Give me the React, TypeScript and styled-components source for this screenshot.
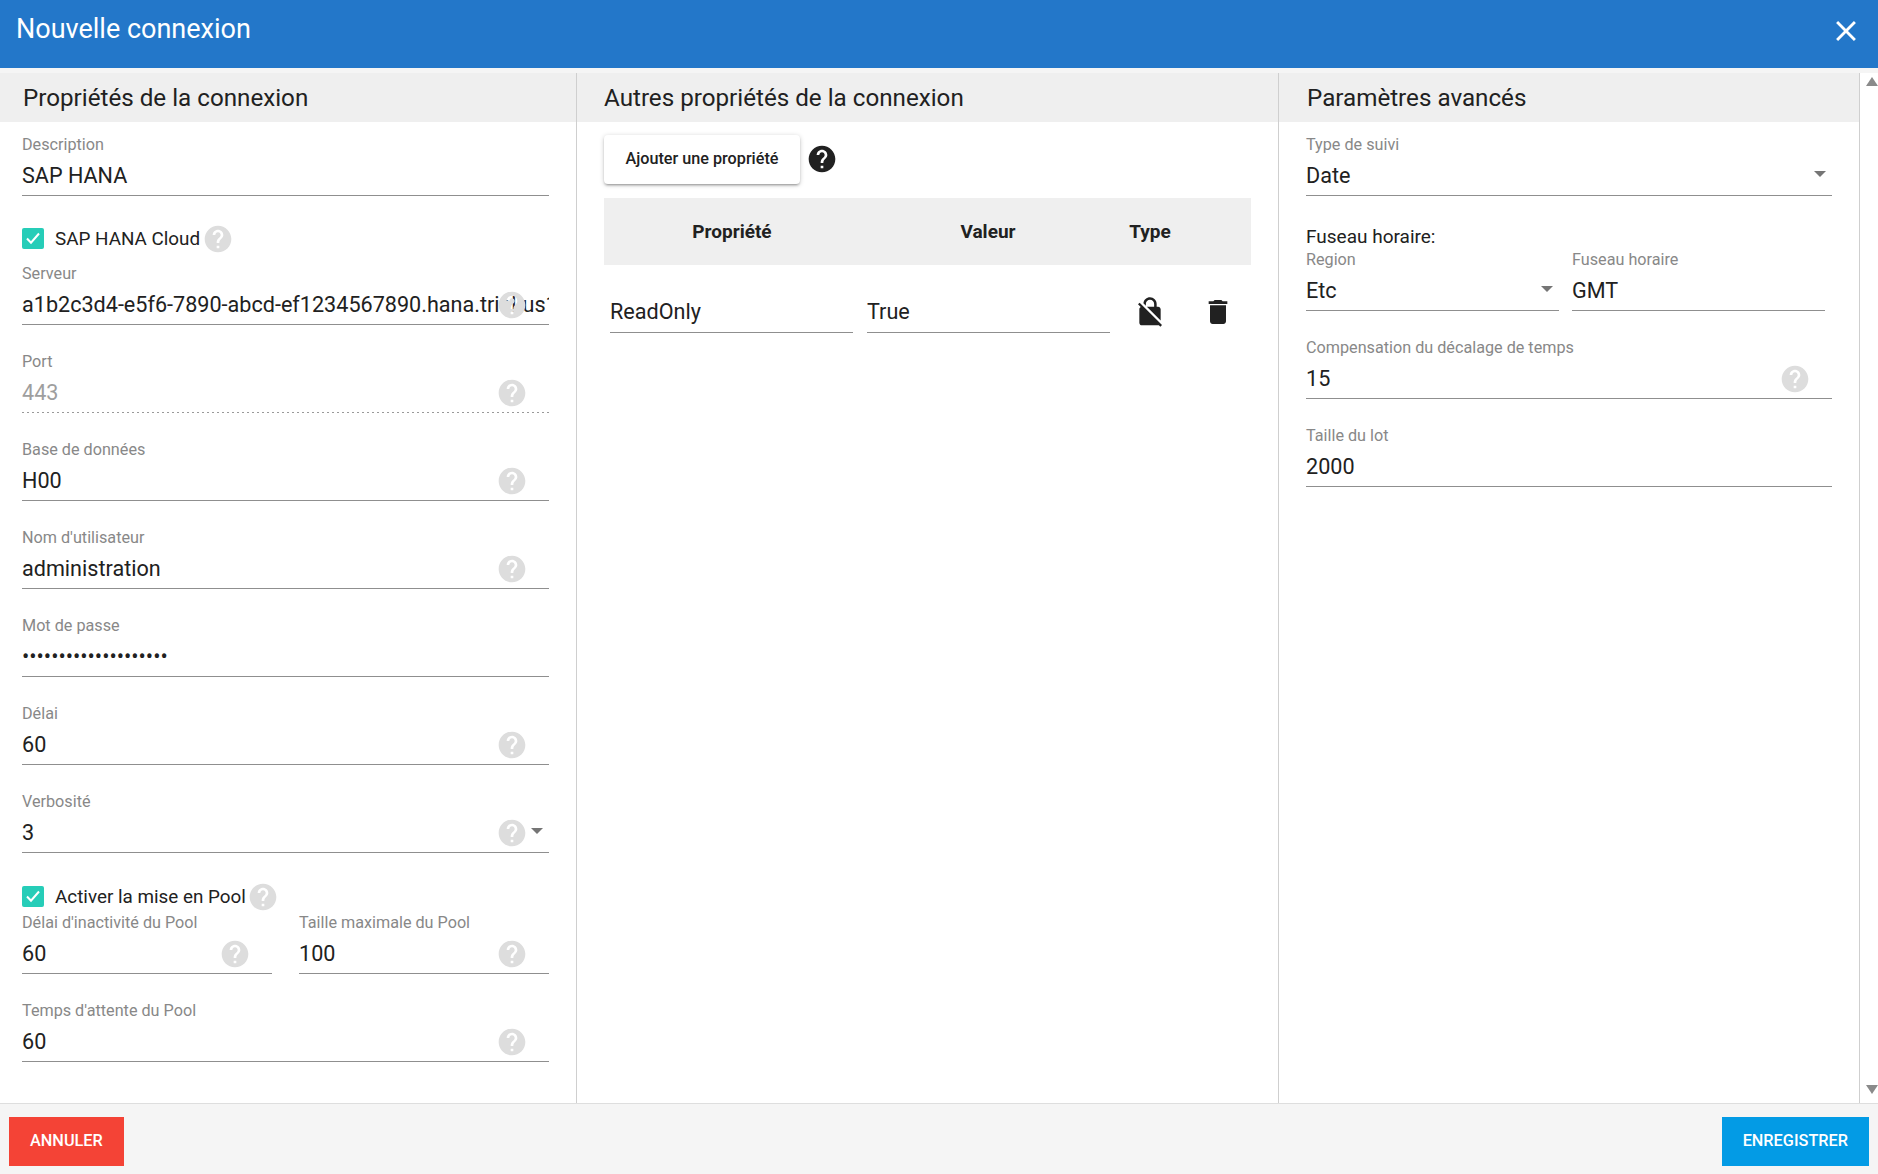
import React from 'react'
import styled, { createGlobalStyle } from 'styled-components'
import { MdClose, MdDelete, MdHelp, MdNoEncryption } from 'react-icons/md'

const GlobalStyle = createGlobalStyle`
  html, body {
    margin: 0;
    padding: 0;
    height: 100%;
    background: #fff;
    font-family: Roboto, "Liberation Sans", sans-serif;
    color: #212121;
  }
  * {
    box-sizing: border-box;
  }
`

const App = () => (
  <Page>
    <GlobalStyle />
    <Header>
      <HeaderTitle>Nouvelle connexion</HeaderTitle>
      <CloseButton>
        <MdClose size={34} />
      </CloseButton>
    </Header>
    <Body>
      <Column $width={577}>
        <ColumnTitle $left={23}>Propriétés de la connexion</ColumnTitle>
        <ColumnContent $left={22}>
          <Field label="Description" value="SAP HANA" />
          <CheckRow label="SAP HANA Cloud" />
          <Field label="Serveur" value="a1b2c3d4-e5f6-7890-abcd-ef1234567890.hana.trial-us10.hanacloud.ondemand.com" help />
          <Field label="Port" value="443" help disabled />
          <Field label="Base de données" value="H00" help />
          <Field label="Nom d'utilisateur" value="administration" help />
          <Field label="Mot de passe" value="••••••••••••••••••••" />
          <Field label="Délai" value="60" help />
          <Field label="Verbosité" value="3" help select />
          <CheckRow label="Activer la mise en Pool" tight />
          <FieldRow>
            <Field label="Délai d'inactivité du Pool" value="60" help />
            <Field label="Taille maximale du Pool" value="100" help />
          </FieldRow>
          <Field label="Temps d'attente du Pool" value="60" help />
        </ColumnContent>
      </Column>
      <Column $width={702}>
        <ColumnTitle $left={27}>Autres propriétés de la connexion</ColumnTitle>
        <ColumnContent $left={27}>
          <Toolbar>
            <AddButton>Ajouter une propriété</AddButton>
            <BlackHelp>
              <MdHelp size={32} />
            </BlackHelp>
          </Toolbar>
          <TableHead>
            <TableHeadCell>Propriété</TableHeadCell>
            <TableHeadCell>Valeur</TableHeadCell>
            <TableHeadCell>Type</TableHeadCell>
          </TableHead>
          <TableRow>
            <CellInput>ReadOnly</CellInput>
            <CellInput>True</CellInput>
            <CellIcon>
              <MdNoEncryption size={32} />
            </CellIcon>
            <CellIcon>
              <MdDelete size={32} />
            </CellIcon>
          </TableRow>
        </ColumnContent>
      </Column>
      <Column $width={581}>
        <ColumnTitle $left={28}>Paramètres avancés</ColumnTitle>
        <ColumnContent $left={27}>
          <Field label="Type de suivi" value="Date" select />
          <GroupTitle>Fuseau horaire:</GroupTitle>
          <FieldRow $gap={13} $right={7}>
            <Field label="Region" value="Etc" select />
            <Field label="Fuseau horaire" value="GMT" />
          </FieldRow>
          <Field label="Compensation du décalage de temps" value="15" help />
          <Field label="Taille du lot" value="2000" />
        </ColumnContent>
      </Column>
      <ScrollBar>
        <ScrollArrow $up />
        <ScrollArrow />
      </ScrollBar>
    </Body>
    <Footer>
      <FooterButton $color="#f44336">Annuler</FooterButton>
      <FooterButton $color="#039be5">Enregistrer</FooterButton>
    </Footer>
  </Page>
)

interface FieldProps {
  label: string
  value: string
  help?: boolean
  select?: boolean
  disabled?: boolean
}

const Field = (props: FieldProps) => (
  <FieldWrapper>
    <FieldLabel>{props.label}</FieldLabel>
    <FieldValue $disabled={props.disabled}>
      <ValueText>{props.value}</ValueText>
      {props.help ? (
        <HelpIcon>
          <MdHelp size={32} />
        </HelpIcon>
      ) : undefined}
      {props.select ? <SelectArrow /> : undefined}
    </FieldValue>
  </FieldWrapper>
)

const CheckRow = (props: { label: string; tight?: boolean }) => (
  <CheckWrapper $tight={props.tight}>
    <CheckBox>
      <svg width="16" height="16" viewBox="0 0 16 16" fill="none">
        <path d="M2 8.5l4 4.2L14 3.5" stroke="#fff" strokeWidth="2" />
      </svg>
    </CheckBox>
    <CheckLabel>{props.label}</CheckLabel>
    <InlineHelp>
      <MdHelp size={32} />
    </InlineHelp>
  </CheckWrapper>
)

const Page = styled.div`
  display: flex;
  flex-direction: column;
  width: 1878px;
  height: 1174px;
  overflow: hidden;
  background: #f5f5f5;
`
const Header = styled.div`
  display: flex;
  flex: none;
  justify-content: space-between;
  height: 68px;
  padding: 0 15px 0 16px;
  background: #2377c9;
  color: #fff;
`
const HeaderTitle = styled.div`
  margin-top: 12px;
  font-size: 27px;
  line-height: 34px;
`
const CloseButton = styled.div`
  margin-top: 14px;
  height: 34px;
`
const Body = styled.div`
  display: flex;
  flex: 1;
  min-height: 0;
  margin-top: 5px;
  background: #fff;
`
const Column = styled.div<{ $width: number }>`
  flex: none;
  width: ${(props) => props.$width}px;
  border-right: 1px solid #cfcfcf;
`
const ColumnTitle = styled.div<{ $left: number }>`
  height: 49px;
  padding-left: ${(props) => props.$left}px;
  background: #efefef;
  font-size: 24.2px;
  line-height: 50px;
`
const ColumnContent = styled.div<{ $left: number }>`
  padding: 12px 27px 0 ${(props) => props.$left}px;
`
const FieldWrapper = styled.div`
  position: relative;
  height: 62px;
  margin-bottom: 26px;
`
const FieldLabel = styled.div`
  height: 22px;
  color: #888;
  font-size: 16.2px;
  line-height: 22px;
  white-space: nowrap;
`
const FieldValue = styled.div<{ $disabled?: boolean }>`
  position: relative;
  height: 40px;
  font-size: 21.6px;
  line-height: 39px;
  ${(props) =>
    props.$disabled
      ? `
    color: #9e9e9e;
    background: linear-gradient(to right, #999 40%, transparent 0) left bottom / 5px 1px repeat-x;
  `
      : `
    color: #212121;
    border-bottom: 1px solid #8f8f8f;
  `}
`
const ValueText = styled.div`
  overflow: hidden;
  white-space: nowrap;
`
const HelpIcon = styled.div`
  position: absolute;
  top: 4px;
  right: 21px;
  height: 32px;
  color: #dddddd;
`
const SelectArrow = styled.div`
  position: absolute;
  top: 15px;
  right: 6px;
  border-top: 6px solid #757575;
  border-left: 6px solid transparent;
  border-right: 6px solid transparent;
`
const CheckWrapper = styled.div<{ $tight?: boolean }>`
  display: flex;
  align-items: center;
  height: 34px;
  margin: ${(props) => (props.$tight ? '0 0 -1px' : '-1px 0 8px')};
`
const CheckBox = styled.div`
  display: flex;
  align-items: center;
  justify-content: center;
  width: 22px;
  height: 21px;
  border-radius: 2px;
  background: #26cdb8;
`
const CheckLabel = styled.div`
  margin: 1px 0 0 11px;
  font-size: 18.85px;
  white-space: nowrap;
`
const InlineHelp = styled.div`
  height: 32px;
  margin: 1px 0 0 1.5px;
  color: #dddddd;
`
const FieldRow = styled.div<{ $gap?: number; $right?: number }>`
  display: grid;
  grid-template-columns: 1fr 1fr;
  column-gap: ${(props) => props.$gap ?? 27}px;
  padding-right: ${(props) => props.$right ?? 0}px;
`
const GroupTitle = styled.div`
  height: 27px;
  font-size: 19px;
  line-height: 30px;
`
const Toolbar = styled.div`
  display: flex;
  align-items: center;
  gap: 6px;
  margin-top: 1px;
`
const AddButton = styled.div`
  width: 196px;
  height: 49px;
  border-radius: 4px;
  background: #fff;
  box-shadow: 0 1px 5px rgba(0, 0, 0, 0.2), 0 2px 2px rgba(0, 0, 0, 0.14), 0 3px 1px -2px rgba(0, 0, 0, 0.12);
  color: #212121;
  font-size: 16.2px;
  font-weight: 500;
  line-height: 47px;
  text-align: center;
`
const BlackHelp = styled.div`
  height: 32px;
  margin-bottom: 2px;
  color: #212121;
`
const TableHead = styled.div`
  display: grid;
  grid-template-columns: 256px 256px 68px 1fr;
  width: 647px;
  height: 67px;
  margin-top: 14px;
  background: #efefef;
`
const TableHeadCell = styled.div`
  font-size: 19px;
  font-weight: 700;
  line-height: 67px;
  text-align: center;
`
const TableRow = styled.div`
  display: grid;
  grid-template-columns: 256px 256px 68px 1fr;
  width: 647px;
  padding-top: 27px;
`
const CellInput = styled.div`
  height: 41px;
  margin: 0 6px;
  border-bottom: 1px solid #8f8f8f;
  font-size: 21.6px;
  line-height: 40px;
  &:first-child {
    margin-right: 7px;
  }
  &:nth-child(2) {
    margin-left: 7px;
  }
`
const CellIcon = styled.div`
  display: flex;
  align-items: center;
  justify-content: center;
  height: 40px;
`
const ScrollBar = styled.div`
  display: flex;
  flex: 1;
  flex-direction: column;
  justify-content: space-between;
  align-items: center;
  padding: 4px 0 9px 5px;
`
const ScrollArrow = styled.div<{ $up?: boolean }>`
  border-left: 6px solid transparent;
  border-right: 6px solid transparent;
  ${(props) => (props.$up ? 'border-bottom: 9px solid #8a8a8a;' : 'border-top: 9px solid #8a8a8a;')}
`
const Footer = styled.div`
  display: flex;
  flex: none;
  justify-content: space-between;
  height: 71px;
  padding: 13px 9px 8px;
  border-top: 1px solid #dedede;
  background: #f5f5f5;
`
const FooterButton = styled.div<{ $color: string }>`
  height: 49px;
  padding: 0 21px;
  background: ${(props) => props.$color};
  color: #fff;
  font-size: 16.3px;
  font-weight: 500;
  line-height: 47px;
  text-transform: uppercase;
`

export default App
